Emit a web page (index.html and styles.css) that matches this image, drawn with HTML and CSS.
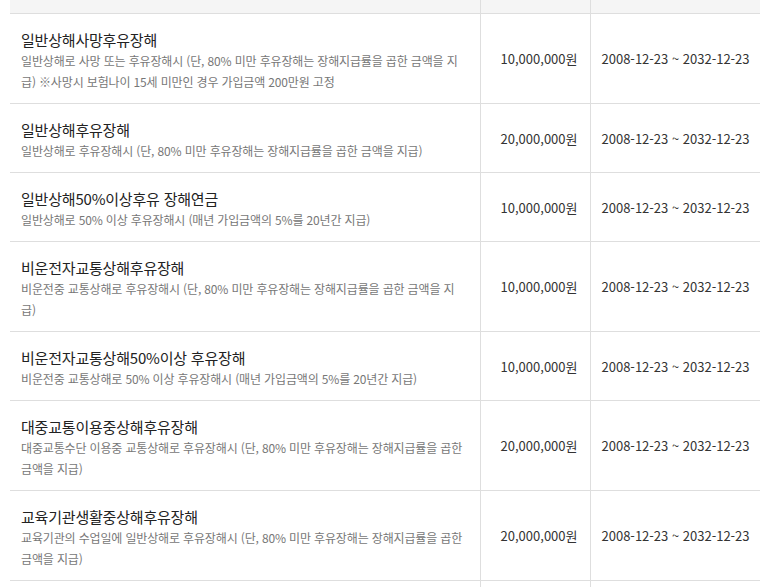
FILE: index.html
```html
<!DOCTYPE html>
<html lang="ko">
<head>
    <meta charset="UTF-8">
    <meta name="viewport" content="width=device-width, initial-scale=1.0">
    <title>보장내용</title>
    <link rel="stylesheet" href="styles.css">
</head>
<body>
    <div class="wrap">
        <table class="cover-table">
            <colgroup>
                <col class="col-name">
                <col class="col-amount">
                <col class="col-period">
            </colgroup>
            <thead>
                <tr>
                    <th></th>
                    <th></th>
                    <th></th>
                </tr>
            </thead>
            <tbody>
                <tr>
                    <td class="name">
                        <p class="title">일반상해사망후유장해</p>
                        <p class="desc">일반상해로 사망 또는 후유장해시 (단, 80% 미만 후유장해는 장해지급률을 곱한 금액을 지급) ※사망시 보험나이 15세 미만인 경우 가입금액 200만원 고정</p>
                    </td>
                    <td class="amount">10,000,000원</td>
                    <td class="period">2008-12-23 ~ 2032-12-23</td>
                </tr>
                <tr>
                    <td class="name">
                        <p class="title">일반상해후유장해</p>
                        <p class="desc">일반상해로 후유장해시 (단, 80% 미만 후유장해는 장해지급률을 곱한 금액을 지급)</p>
                    </td>
                    <td class="amount">20,000,000원</td>
                    <td class="period">2008-12-23 ~ 2032-12-23</td>
                </tr>
                <tr>
                    <td class="name">
                        <p class="title">일반상해50%이상후유 장해연금</p>
                        <p class="desc">일반상해로 50% 이상 후유장해시 (매년 가입금액의 5%를 20년간 지급)</p>
                    </td>
                    <td class="amount">10,000,000원</td>
                    <td class="period">2008-12-23 ~ 2032-12-23</td>
                </tr>
                <tr>
                    <td class="name">
                        <p class="title">비운전자교통상해후유장해</p>
                        <p class="desc">비운전중 교통상해로 후유장해시 (단, 80% 미만 후유장해는 장해지급률을 곱한 금액을 지급)</p>
                    </td>
                    <td class="amount">10,000,000원</td>
                    <td class="period">2008-12-23 ~ 2032-12-23</td>
                </tr>
                <tr>
                    <td class="name">
                        <p class="title">비운전자교통상해50%이상 후유장해</p>
                        <p class="desc">비운전중 교통상해로 50% 이상 후유장해시 (매년 가입금액의 5%를 20년간 지급)</p>
                    </td>
                    <td class="amount">10,000,000원</td>
                    <td class="period">2008-12-23 ~ 2032-12-23</td>
                </tr>
                <tr>
                    <td class="name">
                        <p class="title">대중교통이용중상해후유장해</p>
                        <p class="desc">대중교통수단 이용중 교통상해로 후유장해시 (단, 80% 미만 후유장해는 장해지급률을 곱한 금액을 지급)</p>
                    </td>
                    <td class="amount">20,000,000원</td>
                    <td class="period">2008-12-23 ~ 2032-12-23</td>
                </tr>
                <tr>
                    <td class="name">
                        <p class="title">교육기관생활중상해후유장해</p>
                        <p class="desc">교육기관의 수업일에 일반상해로 후유장해시 (단, 80% 미만 후유장해는 장해지급률을 곱한 금액을 지급)</p>
                    </td>
                    <td class="amount">20,000,000원</td>
                    <td class="period">2008-12-23 ~ 2032-12-23</td>
                </tr>
                <tr>
                    <td class="name">
                        <p class="title">학교폭력상해후유장해</p>
                        <p class="desc">학교폭력으로 상해를 입고 후유장해시</p>
                    </td>
                    <td class="amount">10,000,000원</td>
                    <td class="period">2008-12-23 ~ 2032-12-23</td>
                </tr>
            </tbody>
        </table>
    </div>
</body>
</html>
```

FILE: styles.css
```css
body {
    margin: 0;
    padding: 0;
    font-family: "Noto Sans CJK KR", "Noto Sans", sans-serif;
    color: #222;
    background: #fff;
    overflow: hidden;
}

.wrap {
    padding: 0 7px 0 10px;
}

.cover-table {
    width: 750px;
    border-collapse: collapse;
    table-layout: fixed;
}

.col-name {
    width: 470px;
}

.col-amount {
    width: 110px;
}

.col-period {
    width: 170px;
}

.cover-table th {
    height: 13px;
    padding: 0;
    background: #f5f5f5;
    border-bottom: 1px solid #dedede;
}

.cover-table td {
    border-bottom: 1px solid #dedede;
    vertical-align: middle;
}

.cover-table th + th,
.cover-table td + td {
    border-left: 1px solid #dedede;
}

.name {
    padding: 16px 15px 11px 11px;
}

.title {
    margin: 0;
    font-size: 15px;
    line-height: 20px;
    letter-spacing: -0.2px;
    color: #222;
}

.desc {
    margin: 0;
    font-size: 12px;
    line-height: 21px;
    letter-spacing: -0.15px;
    color: #777;
}

.amount {
    padding: 0 12px;
    text-align: right;
    font-size: 13px;
    color: #333;
}

.period {
    padding: 0 0 0 11px;
    font-size: 13px;
    white-space: nowrap;
    color: #333;
}
```
